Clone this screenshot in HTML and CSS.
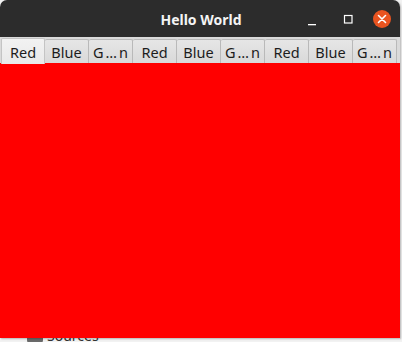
FILE: index.html
```html
<!DOCTYPE html>
<html>
<head>
<meta charset="utf-8">
<link rel="stylesheet" href="styles.css">
</head>
<body>
<div class="window">
  <div class="titlebar">
    <span class="title">Hello World</span>
    <div class="controls">
      <span class="ctl min"><svg width="10" height="10" viewBox="0 0 10 10"><rect x="1" y="8" width="8" height="1.3" fill="#fff"/></svg></span>
      <span class="ctl max"><svg width="10" height="10" viewBox="0 0 10 10"><rect x="1.5" y="1.5" width="7.5" height="7.5" fill="none" stroke="#fff" stroke-width="1.2"/></svg></span>
      <span class="ctl close"><svg width="18" height="18" viewBox="0 0 18 18"><circle cx="9" cy="9" r="9" fill="#e95420"/><path d="M5.5 5.5L12.5 12.5M12.5 5.5L5.5 12.5" stroke="#fff" stroke-width="1.6" stroke-linecap="round"/></svg></span>
    </div>
  </div>
  <div class="tabbar">
    <div class="tab active">Red</div>
    <div class="tab">Blue</div>
    <div class="tab">G<span class="ell">…</span>n</div>
    <div class="tab">Red</div>
    <div class="tab">Blue</div>
    <div class="tab">G<span class="ell">…</span>n</div>
    <div class="tab">Red</div>
    <div class="tab">Blue</div>
    <div class="tab">G<span class="ell">…</span>n</div>
  </div>
  <div class="content"></div>
</div>
<div class="desktop">
  <span class="icon"></span>
  <span class="label">Sources</span>
</div>
</body>
</html>
```
FILE: styles.css
```css
html, body {
  margin: 0;
  padding: 0;
}
body {
  width: 402px;
  height: 342px;
  overflow: hidden;
  background: #f2f2f2;
  font-family: "Noto Sans", "DejaVu Sans", sans-serif;
}
.window {
  position: relative;
  z-index: 2;
  width: 400px;
  height: 338px;
  display: flex;
  flex-direction: column;
  border-radius: 7px 7px 0 0;
  overflow: hidden;
  box-shadow: 1px 1px 2px rgba(0,0,0,0.25);
}
.titlebar {
  height: 37px;
  flex: none;
  background: #2c2c2c;
  display: flex;
  align-items: center;
  justify-content: center;
  position: relative;
}
.title {
  color: #f4f4f4;
  font-weight: bold;
  font-size: 14px;
  margin-top: 1px;
  margin-left: 2px;
}
.controls {
  position: absolute;
  right: 9px;
  top: 10px;
  display: flex;
  align-items: center;
}
.ctl {
  display: flex;
  align-items: center;
  justify-content: center;
}
.ctl.min {
  width: 10px;
  height: 10px;
  margin-right: 26px;
  margin-top: 4px;
}
.ctl.max {
  width: 10px;
  height: 10px;
  margin-right: 20px;
}
.ctl.close {
  width: 18px;
  height: 18px;
}
.tabbar {
  height: 26px;
  flex: none;
  background: #dadada;
  display: flex;
  align-items: flex-end;
  padding-left: 1px;
  box-sizing: border-box;
}
.tab {
  width: 44px;
  height: 24px;
  box-sizing: border-box;
  border: 1px solid #b9b9b9;
  border-bottom: none;
  border-left: none;
  border-radius: 2px 2px 0 0;
  background: linear-gradient(#e6e6e6, #d9d9d9);
  color: #1c1c1c;
  font-size: 14.5px;
  display: flex;
  align-items: center;
  justify-content: center;
  padding-top: 1px;
  white-space: nowrap;
}
.ell {
  margin: 0 2px;
}
.tab.active {
  height: 26px;
  border-left: 1px solid #c4c4c4;
  border-color: #c4c4c4;
  background: linear-gradient(#f2f2f2, #e9e9e9);
  margin-bottom: -1px;
  position: relative;
  z-index: 1;
}
.content {
  flex: 1;
  background: #ff0000;
}
.desktop {
  display: flex;
  align-items: flex-start;
  gap: 4px;
  margin-top: -8px;
  padding-left: 27px;
  position: relative;
  z-index: 1;
}
.icon {
  width: 16px;
  height: 12px;
  background: #6a6a6a;
  border-radius: 3px;
  margin-top: 1px;
}
.label {
  font-size: 14px;
  color: #333;
  line-height: 12px;
}
```
